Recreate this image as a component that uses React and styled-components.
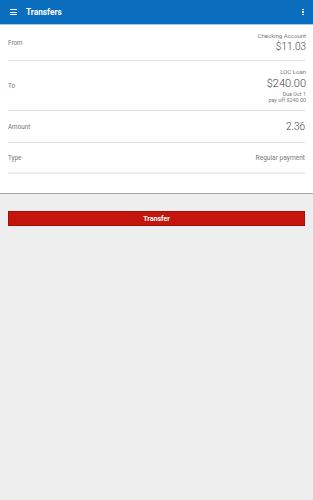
import React from 'react';
import styled, { createGlobalStyle } from 'styled-components';

const GlobalStyle = createGlobalStyle`
  html, body {
    margin: 0;
    padding: 0;
    background: #eeeeee;
    font-family: 'Roboto', 'Noto Sans', sans-serif;
  }
`;

const Page = styled.div`
  min-height: 500px;
  background: #eeeeee;
`;

const Toolbar = styled.div`
  height: 24px;
  background: #0b6dbd;
  border-bottom: 1px solid #9fcdf2;
  display: flex;
  align-items: center;
  padding: 0 9px 0 10px;
`;

const MenuIcon = styled.div`
  width: 7px;
  display: flex;
  flex-direction: column;
  gap: 1.5px;

  span {
    display: block;
    height: 1px;
    background: #fff;
  }
`;

const Title = styled.div`
  margin-left: 9px;
  color: #fff;
  font-size: 8.3px;
  font-weight: 700;
  flex: 1;
`;

const Kebab = styled.div`
  display: flex;
  flex-direction: column;
  gap: 1px;

  span {
    width: 1.6px;
    height: 1.6px;
    background: #fff;
  }
`;

const Card = styled.div`
  background: #fff;
  padding: 0 8px 19px;
  border-bottom: 1px solid #a5a5a5;
`;

const Row = styled.div`
  height: ${p => p.h}px;
  display: flex;
  align-items: center;
  justify-content: space-between;
  border-bottom: ${p => (p.thick ? '2px solid #ececec' : '1px solid #e0e0e0')};
`;

const Label = styled.div`
  font-size: 6.3px;
  color: #757575;
`;

const Values = styled.div`
  display: flex;
  flex-direction: column;
  align-items: flex-end;
  margin-right: -1px;
`;

const Caption = styled.div`
  font-size: 6px;
  line-height: 8px;
  color: #7a7a7a;
`;

const Money = styled.div`
  font-size: ${p => p.size || 10}px;
  line-height: ${p => (p.size || 10) + 4}px;
  font-weight: 300;
  color: #424242;
`;

const Note = styled.div`
  font-size: 5.4px;
  line-height: 6px;
  color: #7a7a7a;
`;

const TypeValue = styled.div`
  font-size: 6.6px;
  color: #7a7a7a;
`;

const ButtonWrap = styled.div`
  padding: 17px 8px 0 8px;
`;

const TransferButton = styled.button`
  width: 100%;
  height: 15px;
  background: #c3150c;
  border: 1px solid #a30f08;
  color: #fff;
  font-family: 'Roboto', sans-serif;
  font-size: 7px;
  font-weight: 700;
  padding: 0;
  display: block;
`;

export default function App() {
  return (
    <Page>
      <GlobalStyle />
      <Toolbar>
        <MenuIcon>
          <span />
          <span />
          <span />
        </MenuIcon>
        <Title>Transfers</Title>
        <Kebab>
          <span />
          <span />
          <span />
        </Kebab>
      </Toolbar>
      <Card>
        <Row h={35}>
          <Label>From</Label>
          <Values>
            <Caption>Checking Account</Caption>
            <Money>$11.03</Money>
          </Values>
        </Row>
        <Row h={49}>
          <Label>To</Label>
          <Values>
            <Caption>LOC Loan</Caption>
            <Money size={11}>$240.00</Money>
            <Note>Due Oct 1</Note>
            <Note>pay off $240.00</Note>
          </Values>
        </Row>
        <Row h={31}>
          <Label>Amount</Label>
          <Money>2.36</Money>
        </Row>
        <Row h={29} thick>
          <Label>Type</Label>
          <TypeValue>Regular payment</TypeValue>
        </Row>
      </Card>
      <ButtonWrap>
        <TransferButton>Transfer</TransferButton>
      </ButtonWrap>
    </Page>
  );
}
